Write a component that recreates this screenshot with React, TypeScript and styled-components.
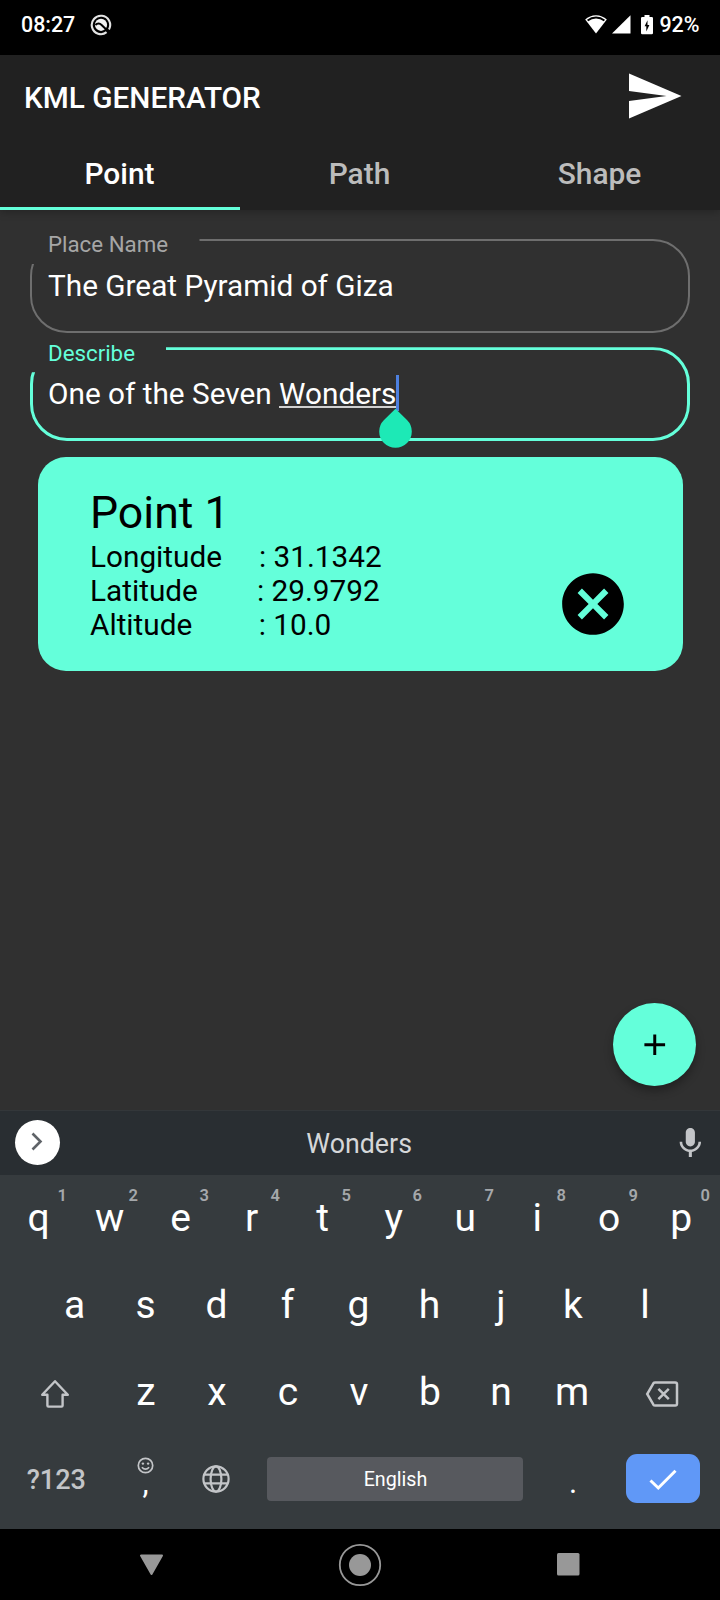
import React from "react";
import styled, { createGlobalStyle, css } from "styled-components";
import { MdAdd, MdCancel, MdMic, MdSend } from "react-icons/md";

const teal = "#64ffda";
const keyIcon = "#c3c5c8";

const GlobalStyle = createGlobalStyle`
  * { box-sizing: border-box; }
  body { margin: 0; background: #303030; }
  svg { display: block; flex: none; }
`;

const Screen = styled.div`
  display: flex;
  flex-direction: column;
  width: 720px;
  height: 1600px;
  overflow: hidden;
  background: #303030;
  color: #fff;
  font-family: Roboto, "Liberation Sans", sans-serif;
`;

/* ---------- status bar ---------- */
const StatusBar = styled.div`
  display: flex;
  align-items: center;
  height: 55px;
  padding: 0 20.5px 6px 21px;
  background: #000;
  font-size: 21.4px;
  font-weight: 500;
  line-height: 26px;
`;
const Clock = styled.span`
  width: 69px;
`;
const StatusIcons = styled.div`
  display: flex;
  align-items: center;
  margin-left: auto;
`;
const SignalGlyph = styled.svg`
  margin-left: 5.5px;
`;
const BatteryGlyph = styled.svg`
  margin-left: 10px;
`;
const Percent = styled.span`
  margin-left: 6px;
`;

/* ---------- app bar ---------- */
const AppBar = styled.header`
  flex: none;
  height: 155px;
  background: #212121;
  box-shadow: 0 2px 8px rgba(0, 0, 0, 0.25);
`;
const TitleRow = styled.div`
  display: flex;
  align-items: center;
  justify-content: space-between;
  height: 85px;
  padding: 0 36px 0 24px;
`;
const Title = styled.h1`
  margin: 0;
  font-size: 29.75px;
  font-weight: 500;
  line-height: 36px;
`;
const SendButton = styled.div`
  display: flex;
  padding-bottom: 2.4px;
`;
const Tabs = styled.nav`
  display: flex;
  height: 70px;
`;
const Tab = styled.div<{ $active?: boolean }>`
  flex: 1;
  display: flex;
  align-items: center;
  justify-content: center;
  padding-right: 1px;
  border-bottom: 3px solid ${(p) => (p.$active ? teal : "transparent")};
  color: ${(p) => (p.$active ? "#fff" : "#bcbcbc")};
  font-size: 29.9px;
  font-weight: 500;
`;

/* ---------- content ---------- */
const Content = styled.main`
  flex: 1;
  display: flex;
  flex-direction: column;
  padding: 29px 30px 0 30px;
`;
const Field = styled.div<{ $focused?: boolean; $notch: number }>`
  position: relative;
  height: 94px;
  margin-bottom: 14.3px;
  padding-left: 18px;
  &::before {
    content: "";
    position: absolute;
    inset: 0;
    border: ${(p) => (p.$focused ? `3px solid ${teal}` : "2px solid #6e6e6e")};
    border-radius: 37px;
    clip-path: polygon(
      ${(p) => p.$notch}px 0, 100% 0, 100% 100%, 0 100%, 0 25px, ${(p) => p.$notch}px 25px
    );
  }
`;
const Label = styled.div<{ $focused?: boolean }>`
  margin-top: ${(p) => (p.$focused ? -7 : -8)}px;
  font-size: 22.3px;
  line-height: 26px;
  color: ${(p) => (p.$focused ? teal : "#a6a6a6")};
`;
const Value = styled.div`
  display: flex;
  margin-top: 11px;
  font-size: 29.75px;
  line-height: 36px;
  white-space: pre;
  ${Label} + & {
    height: 36px;
  }
`;
const FocusedValue = styled(Value)`
  margin-top: 10px;
`;
const Composing = styled.span`
  position: relative;
  &::after {
    content: "";
    position: absolute;
    left: 0;
    right: 0;
    bottom: 4px;
    height: 2px;
    background: #d0d0d0;
  }
`;
const Caret = styled.span`
  position: absolute;
  left: 100%;
  top: -1px;
  width: 3px;
  height: 36px;
  background: #4d80e0;
`;
const CaretHandle = styled.svg`
  position: absolute;
  z-index: 2;
  right: -16px;
  top: 32px;
`;

const Card = styled.section`
  display: flex;
  justify-content: space-between;
  width: 645.5px;
  height: 214px;
  margin: 1.4px 0 0 7.5px;
  padding: 29px 53px 0 52.5px;
  border-radius: 28px;
  background: ${teal};
  color: #000;
`;
const CardTitle = styled.h2`
  margin: 0;
  font-size: 44.6px;
  font-weight: 400;
  line-height: 54px;
`;
const Coordinate = styled.div`
  font-size: 29.75px;
  line-height: 34px;
  white-space: pre;
`;
const DeleteButton = styled.div`
  margin-top: 81px;
`;
const Fab = styled.button`
  display: flex;
  align-items: center;
  justify-content: center;
  align-self: flex-end;
  width: 83.5px;
  height: 83.5px;
  margin: auto -6px 25px 0;
  padding: 0;
  border: 0;
  border-radius: 50%;
  background: ${teal};
  color: #000;
  box-shadow: 0 5px 10px rgba(0, 0, 0, 0.32);
`;

/* ---------- keyboard ---------- */
const Keyboard = styled.section`
  flex: none;
  height: 418px;
  background: #363b3e;
`;
const Suggestions = styled.div`
  display: grid;
  grid-template-columns: 60px 1fr 60px;
  align-items: center;
  height: 64px;
  padding: 0 11.7px 2px 15px;
  background: #292e32;
  box-shadow: 0 -1px 0 #33373a;
  color: #d5d7d9;
`;
const Expand = styled.div`
  display: flex;
  align-items: center;
  justify-content: center;
  width: 45px;
  height: 45px;
  padding: 0 2px 1px 0;
  border-radius: 50%;
  background: #fff;
`;
const Suggestion = styled.div`
  padding: 4px 5px 0 0;
  font-size: 26.8px;
  line-height: 32px;
  text-align: center;
`;
const MicButton = styled.div`
  justify-self: end;
  padding-top: 2px;
`;
const KeyRow = styled.div<{ $inset?: number }>`
  display: flex;
  height: 87px;
  padding-left: ${(p) => p.$inset ?? 3.5}px;
`;
const center = css`
  display: flex;
  align-items: center;
  justify-content: center;
`;
const Key = styled.div<{ $width: number }>`
  ${center}
  position: relative;
  flex: 0 0 ${(p) => p.$width}px;
  padding-bottom: 2px;
  font-size: 39px;
  line-height: 46px;
`;
const ActionKey = styled(Key)`
  padding: 3px 0 0;
`;
const Hint = styled.span`
  position: absolute;
  top: 10px;
  right: 2px;
  width: 20px;
  color: #a5a8ab;
  font-size: 16.5px;
  font-weight: 600;
  line-height: 22px;
  text-align: center;
`;
const BottomRow = styled.div`
  display: flex;
  align-items: center;
  height: 93px;
  padding: 0 20px 8px 0;
`;
const SymbolsKey = styled.div`
  ${center}
  width: 110.5px;
  padding: 3px 0 0 2px;
  color: ${keyIcon};
  font-size: 27px;
  font-weight: 500;
`;
const CommaKey = styled.div`
  display: flex;
  flex-direction: column;
  align-items: center;
  width: 70px;
  height: 44px;
  font-size: 31px;
  line-height: 18px;
`;
const GlobeKey = styled.div`
  ${center}
  width: 70px;
  padding-top: 1px;
`;
const SpaceKey = styled.div`
  ${center}
  width: 256px;
  height: 44px;
  margin-left: 16.5px;
  padding: 2px 0 0 1px;
  border-radius: 4px;
  background: #57595e;
  font-size: 19.7px;
`;
const PeriodKey = styled.div`
  width: 100px;
  padding-top: 8px;
  font-size: 31px;
  line-height: 28px;
  text-align: center;
`;
const EnterKey = styled.div`
  ${center}
  width: 74px;
  height: 49px;
  margin-left: auto;
  padding-top: 2px;
  border-radius: 11px;
  background: #6098f7;
`;

/* ---------- navigation bar ---------- */
const NavBar = styled.nav`
  flex: none;
  display: grid;
  grid-template-columns: 302px 116px 300px;
  align-items: center;
  justify-items: center;
  height: 71px;
  background: #000;
`;

function NoticeIcon() {
  return (
    <svg width="22" height="22" viewBox="0 0 22 22" fill="none">
      <path d="M16.6 18.2 A9.2 9.2 0 1 1 19 15.4" stroke="#e4e4e4" strokeWidth="2.1" />
      <circle cx="11" cy="10.8" r="6.1" fill="#f2f2f2" />
      <path d="M5.4 11 C7.4 9 9.8 9.2 11.6 11 L18.6 17.8" stroke="#000" strokeWidth="2" />
    </svg>
  );
}

function WifiIcon() {
  return (
    <svg width="22" height="19" viewBox="0 0 22 19">
      <path d="M11 0.2 C6.8 0.2 3 1.8 0.2 4.5 L11 18.6 L21.8 4.5 C19 1.8 15.2 0.2 11 0.2Z" fill="#fff" />
      <path d="M2.6 5.4 C7.6 1.6 14.4 1.6 19.4 5.4" stroke="#000" strokeWidth="1.9" fill="none" />
    </svg>
  );
}

function SignalIcon() {
  return (
    <SignalGlyph width="19" height="19" viewBox="0 0 19 19">
      <path d="M18.5 0.3 V18.5 H0 Z" fill="#fff" />
    </SignalGlyph>
  );
}

function BatteryIcon() {
  return (
    <BatteryGlyph width="12" height="20" viewBox="0 0 12 20">
      <path d="M3.5 0 H8.5 V2 H10.8 Q12 2 12 3.2 V18 Q12 19.3 10.8 19.3 H1.2 Q0 19.3 0 18 V3.2 Q0 2 1.2 2 H3.5Z" fill="#fff" />
      <path d="M6.5 5.2 L3.6 11.2 H5.3 V16.4 L8.4 9.9 H6.5Z" fill="#000" />
    </BatteryGlyph>
  );
}

function ShiftIcon() {
  return (
    <svg width="30" height="30" viewBox="0 0 30 30" fill="none" stroke={keyIcon} strokeWidth="2.4" strokeLinejoin="round">
      <path d="M15 2.2 L27.8 15.8 H22.6 V26.6 Q22.6 27.6 21.6 27.6 H8.4 Q7.4 27.6 7.4 26.6 V15.8 H2.2 Z" />
    </svg>
  );
}

function BackspaceIcon() {
  return (
    <svg width="34" height="28" viewBox="0 0 34 28" fill="none" stroke={keyIcon} strokeWidth="2.5">
      <path d="M10.2 2.4 H30.2 Q32 2.4 32 4.2 V23.8 Q32 25.6 30.2 25.6 H10.2 Q9 25.6 8.4 24.7 L2.2 14 L8.4 3.3 Q9 2.4 10.2 2.4 Z" />
      <path d="M13.4 8.8 L23.8 19.2 M23.8 8.8 L13.4 19.2" />
    </svg>
  );
}

function SmileIcon() {
  return (
    <svg width="17" height="17" viewBox="0 0 17 17" fill="none" stroke={keyIcon} strokeWidth="1.7">
      <circle cx="8.5" cy="8.5" r="7.2" />
      <path d="M4.9 10.2 Q8.5 14.2 12.1 10.2" />
      <circle cx="5.9" cy="6.6" r="1.2" fill={keyIcon} stroke="none" />
      <circle cx="11.1" cy="6.6" r="1.2" fill={keyIcon} stroke="none" />
    </svg>
  );
}

function GlobeIcon() {
  return (
    <svg width="28" height="28" viewBox="0 0 28 28" fill="none" stroke={keyIcon} strokeWidth="2.2">
      <circle cx="14" cy="14" r="12.6" />
      <ellipse cx="14" cy="14" rx="5.4" ry="12.6" />
      <path d="M2.2 9.7 H25.8 M2.2 18.3 H25.8" />
    </svg>
  );
}

const topKeys = "qwertyuiop".split("");
const homeKeys = "asdfghjkl".split("");
const bottomKeys = "zxcvbnm".split("");

export default function App() {
  return (
    <Screen>
      <GlobalStyle />
      <StatusBar>
        <Clock>08:27</Clock>
        <NoticeIcon />
        <StatusIcons>
          <WifiIcon />
          <SignalIcon />
          <BatteryIcon />
          <Percent>92%</Percent>
        </StatusIcons>
      </StatusBar>

      <AppBar>
        <TitleRow>
          <Title>KML GENERATOR</Title>
          <SendButton>
            <MdSend size={60} />
          </SendButton>
        </TitleRow>
        <Tabs>
          <Tab $active>Point</Tab>
          <Tab>Path</Tab>
          <Tab>Shape</Tab>
        </Tabs>
      </AppBar>

      <Content>
        <Field $notch={169.5}>
          <Label>Place Name</Label>
          <Value>The Great Pyramid of Giza</Value>
        </Field>
        <Field $focused $notch={136}>
          <Label $focused>Describe</Label>
          <FocusedValue>
            {"One of the Seven "}
            <Composing>
              Wonders
              <Caret />
              <CaretHandle width="33" height="40" viewBox="0 0 33 40">
                <path d="M16.5 0.8 L28 12 A16.3 16.3 0 1 1 5 12 Z" fill="#1de9b6" />
              </CaretHandle>
            </Composing>
          </FocusedValue>
        </Field>
        <Card>
          <div>
            <CardTitle>Point 1</CardTitle>
            <Coordinate>{"Longitude     : 31.1342"}</Coordinate>
            <Coordinate>{"Latitude        : 29.9792"}</Coordinate>
            <Coordinate>{"Altitude         : 10.0"}</Coordinate>
          </div>
          <DeleteButton>
            <MdCancel size={74} />
          </DeleteButton>
        </Card>
        <Fab aria-label="Add point">
          <MdAdd size={35.5} />
        </Fab>
      </Content>

      <Keyboard>
        <Suggestions>
          <Expand>
            <svg width="12" height="19" viewBox="0 0 12 19" fill="none" stroke="#5f6368" strokeWidth="2.6">
              <path d="M1.5 1.5 L9.5 9.5 L1.5 17.5" />
            </svg>
          </Expand>
          <Suggestion>Wonders</Suggestion>
          <MicButton>
            <MdMic size={36.7} color={keyIcon} />
          </MicButton>
        </Suggestions>
        <KeyRow $inset={3.2}>
          {topKeys.map((k, i) => (
            <Key key={k} $width={i < 6 ? 71 : 72}>
              {k}
              <Hint>{(i + 1) % 10}</Hint>
            </Key>
          ))}
        </KeyRow>
        <KeyRow $inset={39}>
          {homeKeys.map((k, i) => (
            <Key key={k} $width={i < 6 ? 71 : 72}>
              {k}
            </Key>
          ))}
        </KeyRow>
        <KeyRow $inset={0}>
          <ActionKey $width={110.5}>
            <ShiftIcon />
          </ActionKey>
          {bottomKeys.map((k) => (
            <Key key={k} $width={71}>
              {k}
            </Key>
          ))}
          <ActionKey $width={109}>
            <BackspaceIcon />
          </ActionKey>
        </KeyRow>
        <BottomRow>
          <SymbolsKey>?123</SymbolsKey>
          <CommaKey>
            <SmileIcon />
            ,
          </CommaKey>
          <GlobeKey>
            <GlobeIcon />
          </GlobeKey>
          <SpaceKey>English</SpaceKey>
          <PeriodKey>.</PeriodKey>
          <EnterKey>
            <svg width="28" height="22" viewBox="0 0 28 22" fill="none" stroke="#fff" strokeWidth="3">
              <path d="M1.5 11.5 L9.3 19 L26.5 1.8" />
            </svg>
          </EnterKey>
        </BottomRow>
      </Keyboard>

      <NavBar>
        <svg width="25" height="22" viewBox="0 0 25 22">
          <path d="M2 1.5 H23 L12.5 20 Z" fill="#989898" stroke="#989898" strokeWidth="2" strokeLinejoin="round" />
        </svg>
        <svg width="44" height="44" viewBox="0 0 44 44">
          <circle cx="22" cy="22" r="20.2" fill="none" stroke="#989898" strokeWidth="1.8" />
          <circle cx="22" cy="22" r="11" fill="#989898" />
        </svg>
        <svg width="23" height="23" viewBox="0 0 23 23">
          <rect width="22.5" height="22.5" rx="1.5" fill="#989898" />
        </svg>
      </NavBar>
    </Screen>
  );
}
